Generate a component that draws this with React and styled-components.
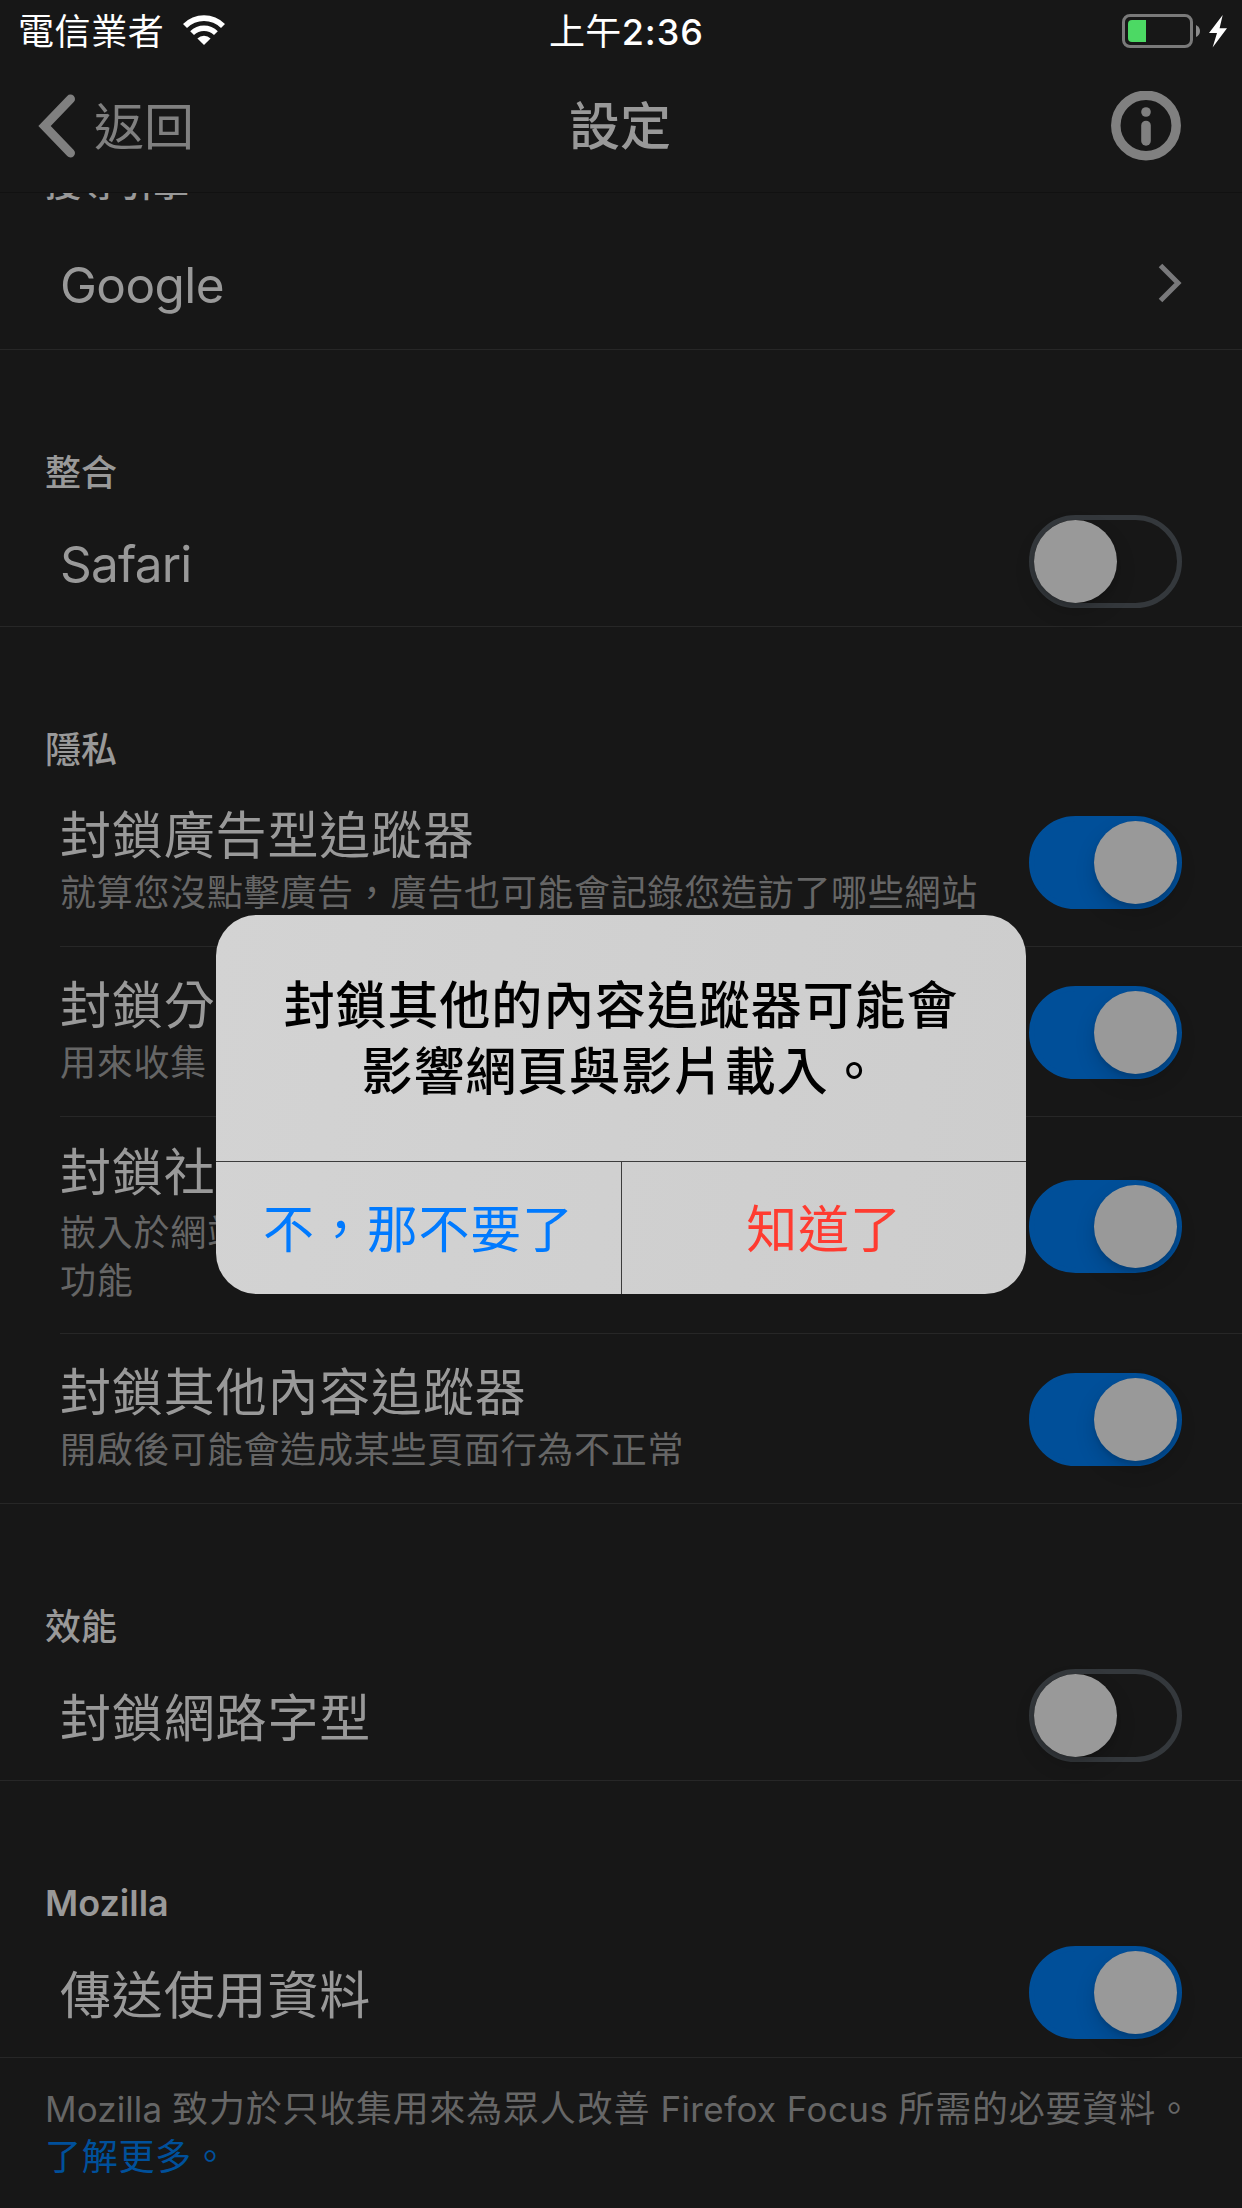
import React from "react";
import styled, { createGlobalStyle } from "styled-components";

const GlobalStyle = createGlobalStyle`
  *, *::before, *::after { box-sizing: border-box; }
  html, body { margin: 0; padding: 0; background: #171717; }
  body {
    font-family: Inter, "Noto Sans CJK TC", sans-serif;
    -webkit-font-smoothing: antialiased;
  }
`;

const Screen = styled.div`
  width: 1242px;
  height: 2208px;
  background: #171717;
  color: #999;
  overflow: hidden;
  display: flex;
  flex-direction: column;
`;

const StatusBar = styled.header`
  height: 60px;
  flex: none;
  display: grid;
  grid-template-columns: 1fr auto 1fr;
  align-items: center;
  padding: 0 14px 0 18px;
  color: #fff;
  font-size: 36px;
  line-height: 60px;
`;

const Carrier = styled.div`
  display: flex;
  align-items: center;
  gap: 19px;
  letter-spacing: 0.6px;

  span { padding-top: 2px; }
  svg { margin-bottom: 2px; }
`;

const Clock = styled.div`
  display: flex;
  padding: 2px 0 0 7px;
  letter-spacing: 0.3px;
`;

const ClockDigits = styled.span`
  font-weight: 500;
  letter-spacing: 1px;
`;

const BatteryGroup = styled.div`
  display: flex;
  justify-content: flex-end;

  svg { margin-bottom: 1px; }
`;

const NavBar = styled.nav`
  height: 133px;
  flex: none;
  display: grid;
  grid-template-columns: 1fr auto 1fr;
  align-items: center;
  padding: 0 38px 1px;
  border-bottom: 1px solid #111;
`;

const BackButton = styled.div`
  display: flex;
  align-items: center;
  gap: 18px;
  color: #808080;
  font-size: 50px;
  line-height: 60px;

  span { padding-top: 2px; }
`;

const NavTitle = styled.h1`
  margin: 0;
  padding: 3px 2px 0 0;
  font-size: 51px;
  font-weight: 500;
  line-height: 60px;
`;

const InfoButton = styled.div`
  display: flex;
  justify-content: flex-end;
  margin-right: 23px;
`;

const List = styled.main`
  flex: 1;
  overflow: hidden;
`;

const SectionHeader = styled.h2`
  margin: 0;
  height: ${(p) => p.$height}px;
  padding: 0 45px ${(p) => p.$bottom}px;
  display: flex;
  align-items: flex-end;
  font-size: 36px;
  font-weight: ${(p) => (p.$latin ? 600 : 500)};
  line-height: ${(p) => (p.$latin ? 45 : 43)}px;
`;

const Row = styled.div`
  height: ${(p) => p.$height}px;
  margin-left: ${(p) => (p.$inset ? 60 : 0)}px;
  padding: ${(p) => p.$drop ?? 2}px 60px 0 ${(p) => (p.$inset ? 0 : 60)}px;
  border-bottom: 1px solid #272727;
  display: flex;
  align-items: center;
  justify-content: space-between;
`;

const RowText = styled.div`
  display: flex;
  flex-direction: column;
  gap: ${(p) => p.$gap}px;
  padding-bottom: ${(p) => p.$lift}px;
`;

const RowTitle = styled.div`
  font-size: 51px;
  line-height: 60px;
  letter-spacing: 0.85px;
  white-space: nowrap;
`;

const SingleTitle = styled(RowTitle)`
  padding-top: 7px;
`;

const LatinTitle = styled(RowTitle)`
  font-size: 49.5px;
  padding-top: ${(p) => p.$top}px;
  letter-spacing: ${(p) => p.$spacing}px;
`;

const RowDetail = styled.div`
  font-size: 36px;
  line-height: 48px;
  letter-spacing: 0.72px;
  color: #666;
  white-space: nowrap;
`;

const Track = styled.div`
  width: 153px;
  height: 93px;
  flex: none;
  display: flex;
  justify-content: ${(p) => (p.$on ? "flex-end" : "flex-start")};
  border: 5px solid ${(p) => (p.$on ? "#004f99" : "#34383c")};
  border-radius: 47px;
  background: ${(p) => (p.$on ? "#004f99" : "transparent")};
`;

const Knob = styled.div`
  width: 83px;
  height: 83px;
  border-radius: 50%;
  background: #999;
  box-shadow: 0 9px 20px rgba(0, 0, 0, 0.15), 0 3px 4px rgba(0, 0, 0, 0.1);
`;

const Footer = styled.footer`
  padding: 27px 45px 0;
  color: #666;
  font-size: 36px;
  line-height: 48px;
  letter-spacing: 0.77px;
  white-space: nowrap;
`;

const LatinRun = styled.span`
  font-size: 35px;
  letter-spacing: ${(p) => p.$spacing}px;
`;

const FooterLink = styled.div`
  color: #00509b;
`;

const Overlay = styled.div`
  position: absolute;
  top: 0;
  left: 0;
  width: 1242px;
  height: 2208px;
  padding-top: 1px;
  display: flex;
  align-items: center;
  justify-content: center;
`;

const Dialog = styled.section`
  width: 810px;
  height: 379px;
  border-radius: 41px;
  overflow: hidden;
  background: linear-gradient(100deg, #d3d3d3 0%, #d0d0d0 50%, #cdcdcd 100%);
  color: #000;
  display: flex;
  flex-direction: column;
`;

const DialogMessage = styled.p`
  margin: 0;
  height: 246px;
  padding-top: 58px;
  text-align: center;
  font-size: 51px;
  font-weight: 500;
  line-height: 66px;
  letter-spacing: 0.9px;
`;

const DialogActions = styled.div`
  height: 133px;
  display: grid;
  grid-template-columns: 405px 405px;
  border-top: 1px solid #3c3c3c;
`;

const DialogButton = styled.button`
  appearance: none;
  border: 0;
  border-left: ${(p) => (p.$divided ? "1px solid #3c3c3c" : "0")};
  background: none;
  padding: 0 0 5px;
  font: inherit;
  font-size: 51px;
  letter-spacing: 0.8px;
  color: ${(p) => p.$color};
`;

const WifiIcon = () => (
  <svg width="42" height="30" viewBox="0 0 42 30" fill="#fff">
    <path d="M0 9A29.7 29.7 0 0 1 42 9L38 13A24 24 0 0 0 4 13Z" />
    <path d="M7.2 16.2A19.5 19.5 0 0 1 34.8 16.2L31 20A14.2 14.2 0 0 0 11 20Z" />
    <path d="M14.4 23.4A9.4 9.4 0 0 1 27.6 23.4L21 30Z" />
  </svg>
);

const BatteryIcon = () => (
  <svg width="106" height="36" viewBox="0 0 106 36">
    <rect x="1.5" y="2.5" width="68" height="31" rx="6.5" fill="none" stroke="#7a7a7a" strokeWidth="3" />
    <path d="M24 7V29H10A4 4 0 0 1 6 25V11A4 4 0 0 1 10 7Z" fill="#4cd964" />
    <path d="M74 12Q78 14 78 18Q78 22 74 24Z" fill="#8b8b8b" />
    <path d="M100.7 2L87 20H95L90.6 34.5L105 15.3H97.6Z" fill="#fff" />
  </svg>
);

const BackIcon = () => (
  <svg width="38" height="64" viewBox="0 0 38 64" fill="none" stroke="#808080" strokeWidth="9" strokeLinecap="round">
    <path d="M32.5 5L6.6 32L32.5 59" />
  </svg>
);

const InfoIcon = () => (
  <svg width="70" height="70" viewBox="0 0 70 70">
    <circle cx="35" cy="34.5" r="30.2" fill="none" stroke="#808080" strokeWidth="9.5" />
    <circle cx="35" cy="21" r="4.8" fill="#808080" />
    <rect x="30.2" y="29.7" width="9.6" height="25" rx="4.8" fill="#808080" />
  </svg>
);

const DisclosureIcon = () => (
  <svg width="24" height="40" viewBox="0 0 24 40" fill="none" stroke="#79797b" strokeWidth="5">
    <path d="M2.5 2.5L20 20L2.5 37.5" />
  </svg>
);

const Switch = ({ on }) => (
  <Track $on={on} role="switch" aria-checked={on}>
    <Knob />
  </Track>
);

const privacyRows = [
  { title: "封鎖廣告型追蹤器", detail: ["就算您沒點擊廣告，廣告也可能會記錄您造訪了哪些網站"], height: 170, inset: true },
  { title: "封鎖分", detail: ["用來收集"], height: 170, inset: true },
  { title: "封鎖社", detail: ["嵌入於網站", "功能"], height: 217, inset: true, gap: 6, lift: 5 },
  { title: "封鎖其他內容追蹤器", detail: ["開啟後可能會造成某些頁面行為不正常"], height: 170 },
];

export default function App() {
  return (
    <>
      <GlobalStyle />
      <Screen>
        <StatusBar>
          <Carrier>
            <span>電信業者</span>
            <WifiIcon />
          </Carrier>
          <Clock>
            上午<ClockDigits>2:36</ClockDigits>
          </Clock>
          <BatteryGroup>
            <BatteryIcon />
          </BatteryGroup>
        </StatusBar>
        <NavBar>
          <BackButton>
            <BackIcon />
            <span>返回</span>
          </BackButton>
          <NavTitle>設定</NavTitle>
          <InfoButton>
            <InfoIcon />
          </InfoButton>
        </NavBar>
        <List>
          <SectionHeader $height={24} $bottom={11}>搜尋引擎</SectionHeader>
          <Row $height={133} $drop={0}>
            <LatinTitle $top={3} $spacing={-0.6}>Google</LatinTitle>
            <DisclosureIcon />
          </Row>

          <SectionHeader $height={145} $bottom={0}>整合</SectionHeader>
          <Row $height={132}>
            <LatinTitle $top={5} $spacing={-0.8}>Safari</LatinTitle>
            <Switch on={false} />
          </Row>

          <SectionHeader $height={150} $bottom={5}>隱私</SectionHeader>
          {privacyRows.map((row) => (
            <Row key={row.title} $height={row.height} $inset={row.inset}>
              <RowText $gap={row.gap ?? 3} $lift={row.lift ?? 3}>
                <RowTitle>{row.title}</RowTitle>
                <RowDetail>
                  {row.detail.map((line) => (
                    <div key={line}>{line}</div>
                  ))}
                </RowDetail>
              </RowText>
              <Switch on />
            </Row>
          ))}

          <SectionHeader $height={145} $bottom={0}>效能</SectionHeader>
          <Row $height={132}>
            <SingleTitle>封鎖網路字型</SingleTitle>
            <Switch on={false} />
          </Row>

          <SectionHeader $height={145} $bottom={0} $latin>Mozilla</SectionHeader>
          <Row $height={132}>
            <SingleTitle>傳送使用資料</SingleTitle>
            <Switch on />
          </Row>
          <Footer>
            <LatinRun $spacing={0.1}>Mozilla </LatinRun>
            致力於只收集用來為眾人改善
            <LatinRun $spacing={0.4}> Firefox Focus </LatinRun>
            所需的必要資料。
            <FooterLink>了解更多。</FooterLink>
          </Footer>
        </List>
      </Screen>
      <Overlay>
        <Dialog role="alertdialog">
          <DialogMessage>
            封鎖其他的內容追蹤器可能會
            <br />
            影響網頁與影片載入。
          </DialogMessage>
          <DialogActions>
            <DialogButton $color="#007aff">不，那不要了</DialogButton>
            <DialogButton $divided $color="#ff3b30">知道了</DialogButton>
          </DialogActions>
        </Dialog>
      </Overlay>
    </>
  );
}
